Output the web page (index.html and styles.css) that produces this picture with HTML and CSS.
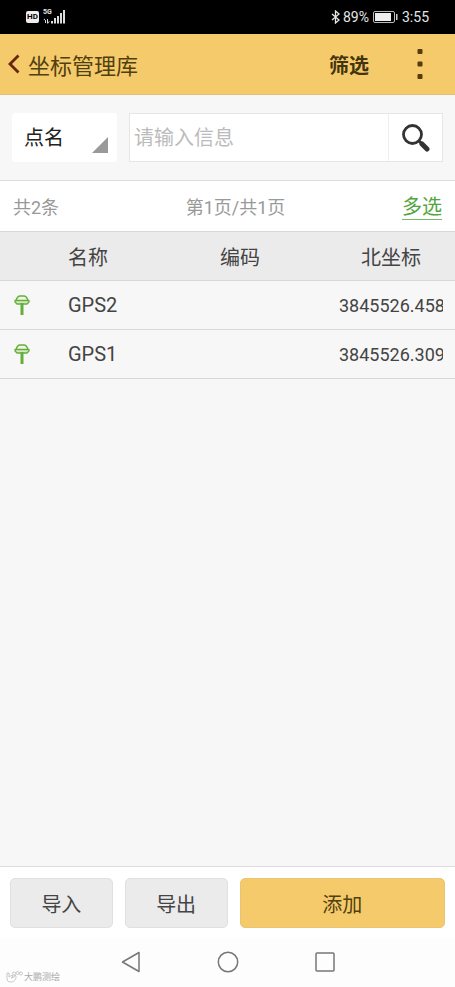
FILE: index.html
```html
<!DOCTYPE html>
<html lang="zh-CN">
<head>
<meta charset="utf-8">
<meta name="viewport" content="width=device-width, initial-scale=1">
<title>坐标管理库</title>
<link rel="stylesheet" href="styles.css">
</head>
<body>
<div class="status">
  <div class="status-group">
    <span class="hd">HD</span>
    <span class="network">
      <span class="network-type">5G</span>
      <svg width="22" height="14" viewBox="0 0 22 14" fill="#ddd" aria-hidden="true">
        <path d="M0 10.500L2 8.500V13H3V10H1zM4 9H5V12L7 11 5 13.500H4zM8 11h2v2.500H8zM11 8h2v5.500h-2zM14 6h2v7.500h-2zM17 3h2v10.500h-2zM20 0h2v13.500h-2z"/>
      </svg>
    </span>
  </div>
  <div class="status-group">
    <svg width="10" height="14" viewBox="0 0 10 14" fill="none" stroke="#e6e6e6" stroke-width="1.300" aria-hidden="true"><path d="M1 4l7 6-3.500 3V1L8 4l-7 6"/></svg>
    <span>89%</span>
    <svg class="battery" width="25" height="12" viewBox="0 0 25 12" aria-hidden="true">
      <rect x=".5" y=".5" width="21" height="11" rx="1.500" fill="none" stroke="#bbb"/>
      <rect x="2" y="2" width="16" height="8" fill="#eee"/>
      <rect x="23" y="3" width="1.500" height="6" fill="#ccc"/>
    </svg>
    <span>3:55</span>
  </div>
</div>

<header class="header">
  <button class="back" type="button" aria-label="返回">
    <svg width="12" height="20" viewBox="0 0 12 20" fill="none" stroke="#65260b" stroke-width="2.800" aria-hidden="true"><path d="M10.500 1.500L2 10l8.500 8.500"/></svg>
  </button>
  <h1 class="title">坐标管理库</h1>
  <button class="filter" type="button">筛选</button>
  <button class="more" type="button" aria-label="更多">
    <svg width="6" height="32" viewBox="0 0 6 32" fill="#573b0c" aria-hidden="true"><rect x=".5" y="1" width="5" height="5" rx="1"/><rect x=".5" y="13.500" width="5" height="5" rx="1"/><rect x=".5" y="26" width="5" height="5" rx="1"/></svg>
  </button>
</header>

<main class="main">
  <form class="search">
    <div class="field">
      <select class="select" aria-label="查询字段"><option>点名</option></select>
      <svg class="corner" width="16" height="16" viewBox="0 0 16 16" fill="#999" aria-hidden="true"><path d="M16 0v16H0z"/></svg>
    </div>
    <div class="query">
      <input class="input" type="text" placeholder="请输入信息" aria-label="查询信息">
      <button class="go" type="button" aria-label="搜索">
        <svg width="28" height="28" viewBox="0 0 28 28" fill="none" stroke="#333" aria-hidden="true"><circle cx="10.500" cy="10.500" r="9" stroke-width="2.800"/><path d="M17 17l2.500 2.500" stroke-width="3"/><path d="M20 20l5 5" stroke-width="5" stroke-linecap="round"/></svg>
      </button>
    </div>
  </form>

  <div class="summary">
    <span>共2条</span>
    <span class="pages">第1页/共1页</span>
    <a class="multi" href="#">多选</a>
  </div>

  <table class="points">
    <colgroup><col class="col-icon"><col class="col-name"><col><col class="col-north"></colgroup>
    <thead>
      <tr><th></th><th>名称</th><th>编码</th><th class="north">北坐标</th></tr>
    </thead>
    <tbody>
      <tr>
        <td class="icon"><svg width="16" height="20" viewBox="0 0 16 20" aria-hidden="true"><path d="M2 5.500C3 2.500 4.500 1 6 1h4c1.500 0 3 1.500 4 4.500" fill="#edf7e4" stroke="#65ad3c" stroke-width="1.400"/><path d="M1 5.500h14v1.500l-2 2H3L1 7z" fill="#d3eabf" stroke="#65ad3c" stroke-width="1.300" stroke-linejoin="round"/><path d="M6.500 8h3v12h-3z" fill="#65ad3c"/></svg></td>
        <td>GPS2</td><td></td><td class="north"><div class="number">3845526.458</div></td>
      </tr>
      <tr>
        <td class="icon"><svg width="16" height="20" viewBox="0 0 16 20" aria-hidden="true"><path d="M2 5.500C3 2.500 4.500 1 6 1h4c1.500 0 3 1.500 4 4.500" fill="#edf7e4" stroke="#65ad3c" stroke-width="1.400"/><path d="M1 5.500h14v1.500l-2 2H3L1 7z" fill="#d3eabf" stroke="#65ad3c" stroke-width="1.300" stroke-linejoin="round"/><path d="M6.500 8h3v12h-3z" fill="#65ad3c"/></svg></td>
        <td>GPS1</td><td></td><td class="north"><div class="number">3845526.309</div></td>
      </tr>
    </tbody>
  </table>
</main>

<footer class="actions">
  <button class="button" type="button">导入</button>
  <button class="button" type="button">导出</button>
  <button class="button primary" type="button">添加</button>
</footer>

<nav class="system">
  <button class="key" type="button" aria-label="后退"><svg width="22" height="24" viewBox="0 0 22 24" fill="none" stroke="#777" stroke-width="1.500" stroke-linejoin="round" aria-hidden="true"><path d="M19 2.500v19L2.500 12z"/></svg></button>
  <button class="key" type="button" aria-label="主页"><svg width="22" height="24" viewBox="0 0 22 24" fill="none" stroke="#777" stroke-width="1.500" aria-hidden="true"><circle cx="11" cy="12" r="9.700"/></svg></button>
  <button class="key" type="button" aria-label="最近任务"><svg width="22" height="24" viewBox="0 0 22 24" fill="none" stroke="#777" stroke-width="1.500" aria-hidden="true"><rect x="2" y="3" width="18" height="18" rx="1"/></svg></button>
  <div class="mark">
    <svg width="17" height="13" viewBox="0 0 17 13" fill="#fff" stroke="#bbb" stroke-width=".8" aria-hidden="true"><path d="M1 2h2v4l3-2 1 1-2 2 3-1 1-2 1 1c0 4-2 6-5 6S1 10 1 7z"/><circle cx="8" cy="2.500" r="1.500"/><circle cx="11.500" cy="2" r="1.500"/><circle cx="15" cy="2.500" r="1.500"/></svg>
    <span>大鹏测绘</span>
  </div>
</nav>
</body>
</html>
```
FILE: styles.css
```css
* {
  box-sizing: border-box;
}

body {
  margin: 0;
  min-height: 100vh;
  display: flex;
  flex-direction: column;
  background: #f7f7f7;
  color: #444;
  font-family: Roboto, "Noto Sans CJK SC", sans-serif;
  font-size: 20px;
}

button,
input,
select {
  margin: 0;
  padding: 0;
  border: 0;
  border-radius: 0;
  background: none;
  color: inherit;
  font: inherit;
}

svg {
  display: block;
  flex: none;
}

.status {
  display: flex;
  justify-content: space-between;
  height: 34px;
  padding: 0 26px;
  background: #000;
  color: #e6e6e6;
  font-size: 14px;
}

.status-group {
  display: flex;
  align-items: center;
  gap: 2px;
}

.hd {
  width: 13px;
  margin-right: 2px;
  border-radius: 2px;
  background: #eee;
  color: #000;
  font-size: 8px;
  font-weight: 700;
  line-height: 12px;
  text-align: center;
}

.network {
  position: relative;
}

.network-type {
  position: absolute;
  top: -2px;
  left: 0;
  font-size: 7px;
  font-weight: 700;
  line-height: 8px;
}

.battery {
  margin: 0 2px;
}

.header {
  display: flex;
  align-items: center;
  height: 61px;
  padding: 0 32px 0 8px;
  border-bottom: 1px solid #dcc07c;
  background: #f5ca6b;
  color: #51400f;
}

.back {
  width: 20px;
}

.title {
  flex: 1;
  margin: 0;
  font-size: 22px;
  font-weight: 400;
}

.filter {
  margin-right: 48px;
  color: #43340f;
  font-weight: 700;
}

.main {
  flex: 1;
}

.search {
  display: flex;
  gap: 12px;
  padding: 18px 12px;
}

.field {
  position: relative;
  flex: none;
  width: 105px;
  height: 49px;
}

.select {
  width: 100%;
  height: 100%;
  padding-left: 12px;
  border-radius: 3px;
  background: #fff;
  color: #222;
  appearance: none;
}

.corner {
  position: absolute;
  right: 9px;
  bottom: 9px;
  pointer-events: none;
}

.query {
  flex: 1;
  display: flex;
  min-width: 0;
  height: 49px;
  border: 1px solid #e6e6e6;
  background: #fff;
}

.input {
  flex: 1;
  min-width: 0;
  padding: 0 4px;
}

.input::placeholder {
  color: #bbb;
  opacity: 1;
}

.go {
  display: flex;
  align-items: center;
  justify-content: center;
  width: 54px;
  border-left: 1px solid #eee;
}

.summary {
  display: grid;
  grid-template-columns: 1fr auto 1fr;
  align-items: center;
  height: 51px;
  padding: 0 13px;
  border-top: 1px solid #ddd;
  background: #fff;
  color: #999;
  font-size: 18px;
}

.pages {
  padding-left: 16px;
}

.multi {
  justify-self: end;
  padding-top: 3px;
  border-bottom: 1px solid #77b869;
  color: #51a53d;
  font-size: 20px;
  line-height: 24px;
  text-decoration: none;
}

.points {
  width: 100%;
  border-collapse: collapse;
  table-layout: fixed;
}

.col-icon {
  width: 68px;
}

.col-name {
  width: 152px;
}

.col-north {
  width: 116px;
}

.points th,
.points td {
  height: 49px;
  padding: 0;
  border-bottom: 1px solid #d8d8d8;
  font-weight: 400;
  text-align: left;
}

.points th {
  border-top: 1px solid #d8d8d8;
  background: #ebebeb;
}

.points .north {
  padding-right: 12px;
  text-align: center;
}

.points .icon {
  padding-left: 14px;
}

.number {
  overflow: hidden;
  font-size: 18px;
  text-align: left;
}

.actions {
  display: grid;
  grid-template-columns: 1fr 1fr 2fr;
  gap: 12px;
  padding: 11px 10px 10px;
  border-top: 1px solid #ddd;
  background: #fff;
}

.button {
  height: 50px;
  border: 1px solid #e0e0e0;
  border-radius: 5px;
  background: #ebebeb;
}

.primary {
  border-color: #ebc473;
  background: #f5ca6b;
  color: #51400f;
}

.system {
  position: relative;
  display: flex;
  justify-content: center;
  gap: 75px;
  height: 49px;
  padding-top: 12px;
  background: #fdfdfd;
}

.key {
  height: 24px;
}

.mark {
  position: absolute;
  bottom: 3px;
  left: 6px;
  display: flex;
  align-items: center;
  gap: 1px;
  color: #aaa;
  font-size: 9px;
  line-height: 14px;
}
```
